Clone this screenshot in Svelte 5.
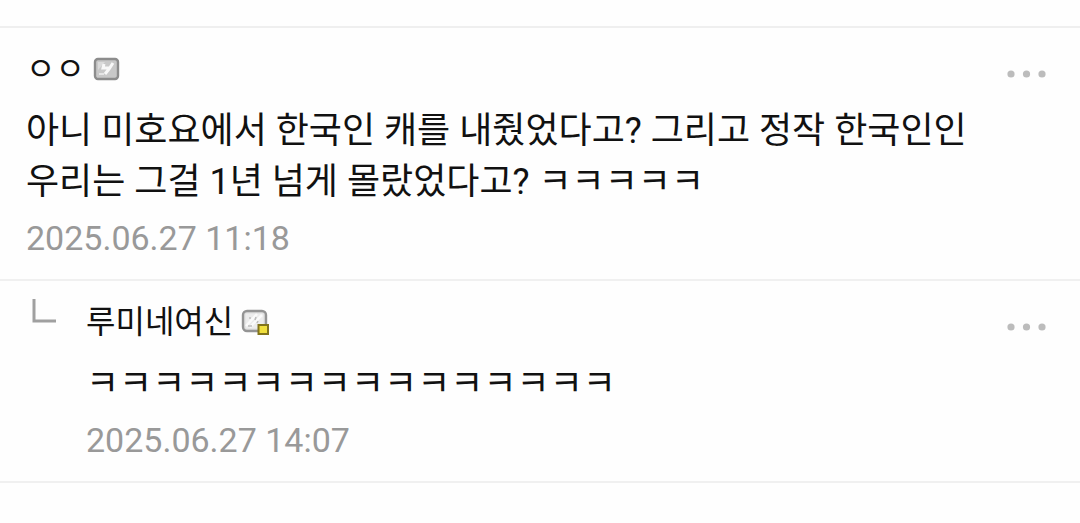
<script>
  const comments = [
    {
      author: 'ㅇㅇ', member: false, reply: false, time: '2025.06.27 11:18',
      lines: ['아니 미호요에서 한국인 캐를 내줬었다고? 그리고 정작 한국인인', '우리는 그걸 1년 넘게 몰랐었다고? ㅋㅋㅋㅋㅋ']
    },
    {
      author: '루미네여신', member: true, reply: true, time: '2025.06.27 14:07',
      lines: ['ㅋㅋㅋㅋㅋㅋㅋㅋㅋㅋㅋㅋㅋㅋㅋㅋ']
    }
  ];
</script>

<main>
  {#each comments as c}
    <article>
      {#if c.reply}
        <svg class="branch" width="26" height="26" viewBox="0 0 26 26" aria-hidden="true">
          <path d="M2 1V23H24" fill="none" stroke="#a0a0a0" stroke-width="3" />
        </svg>
      {/if}
      <div class="content">
        <header>
          <span class="author">{c.author}</span>
          {#if c.member}
            <svg width="30" height="28" viewBox="0 0 30 28" aria-hidden="true">
              <rect x="2" y="3" width="23" height="20" rx="4" fill="#dedede" stroke="#949494" stroke-width="2.4" />
              <rect x="4.5" y="5.5" width="18" height="15" rx="1" fill="#ececec" />
              <path d="M5 18L16 6M9 19L21 7" stroke="#fafafa" stroke-width="2.5" />
              <path d="M8 10H10M15 9L14 12M7 18H11M17 13L16 15" stroke="#bdbdbd" stroke-width="1.6" />
              <rect x="17.5" y="17" width="9.5" height="9" fill="#f0df3c" stroke="#82741b" stroke-width="2" />
            </svg>
          {:else}
            <svg width="30" height="28" viewBox="0 0 30 28" aria-hidden="true">
              <rect x="2" y="4" width="23" height="20" rx="3" fill="#c8c8c8" stroke="#8c8c8c" stroke-width="2.4" />
              <path d="M5 7H12L5 15Z" fill="#dadada" />
              <path d="M11 9L10 13H16M20 8L16 14L12 19" fill="none" stroke="#f8f8f8" stroke-width="3" />
              <path d="M6 19H11" stroke="#e6e6e6" stroke-width="2" />
            </svg>
          {/if}
        </header>
        <p>{#each c.lines as line, i}{#if i}<br />{/if}{line}{/each}</p>
        <time>{c.time}</time>
      </div>
      <button aria-label="더보기">
        <svg width="40" height="10" viewBox="0 0 40 10" aria-hidden="true">
          <g fill="#bcbcbc"><circle cx="5" cy="5" r="3.6" /><circle cx="20.5" cy="5" r="3.6" /><circle cx="36" cy="5" r="3.6" /></g>
        </svg>
      </button>
    </article>
  {/each}
</main>

<style>
  :global(body) { margin: 0; background: #fefefe; }
  main {
    margin-top: 26px;
    border-top: 2px solid #efefef;
    font-family: Roboto, "Noto Sans CJK KR", sans-serif;
    color: #111;
  }
  article {
    display: flex;
    align-items: flex-start;
    padding: 17px 34px 21px 26px;
    border-bottom: 2px solid #f0f0f0;
  }
  .content { flex: 1; min-width: 0; }
  header { display: flex; align-items: center; gap: 8px; height: 48px; }
  .author { font-size: 32px; line-height: 48px; }
  p { margin: 13px 0 10px; font-size: 36px; line-height: 51px; }
  time { display: block; font-size: 34px; line-height: 40px; color: #999; }
  button { margin: 24px 0 0; padding: 0; border: 0; background: none; line-height: 0; cursor: pointer; }
  .branch { margin: 0 28px 0 6px; }
</style>
